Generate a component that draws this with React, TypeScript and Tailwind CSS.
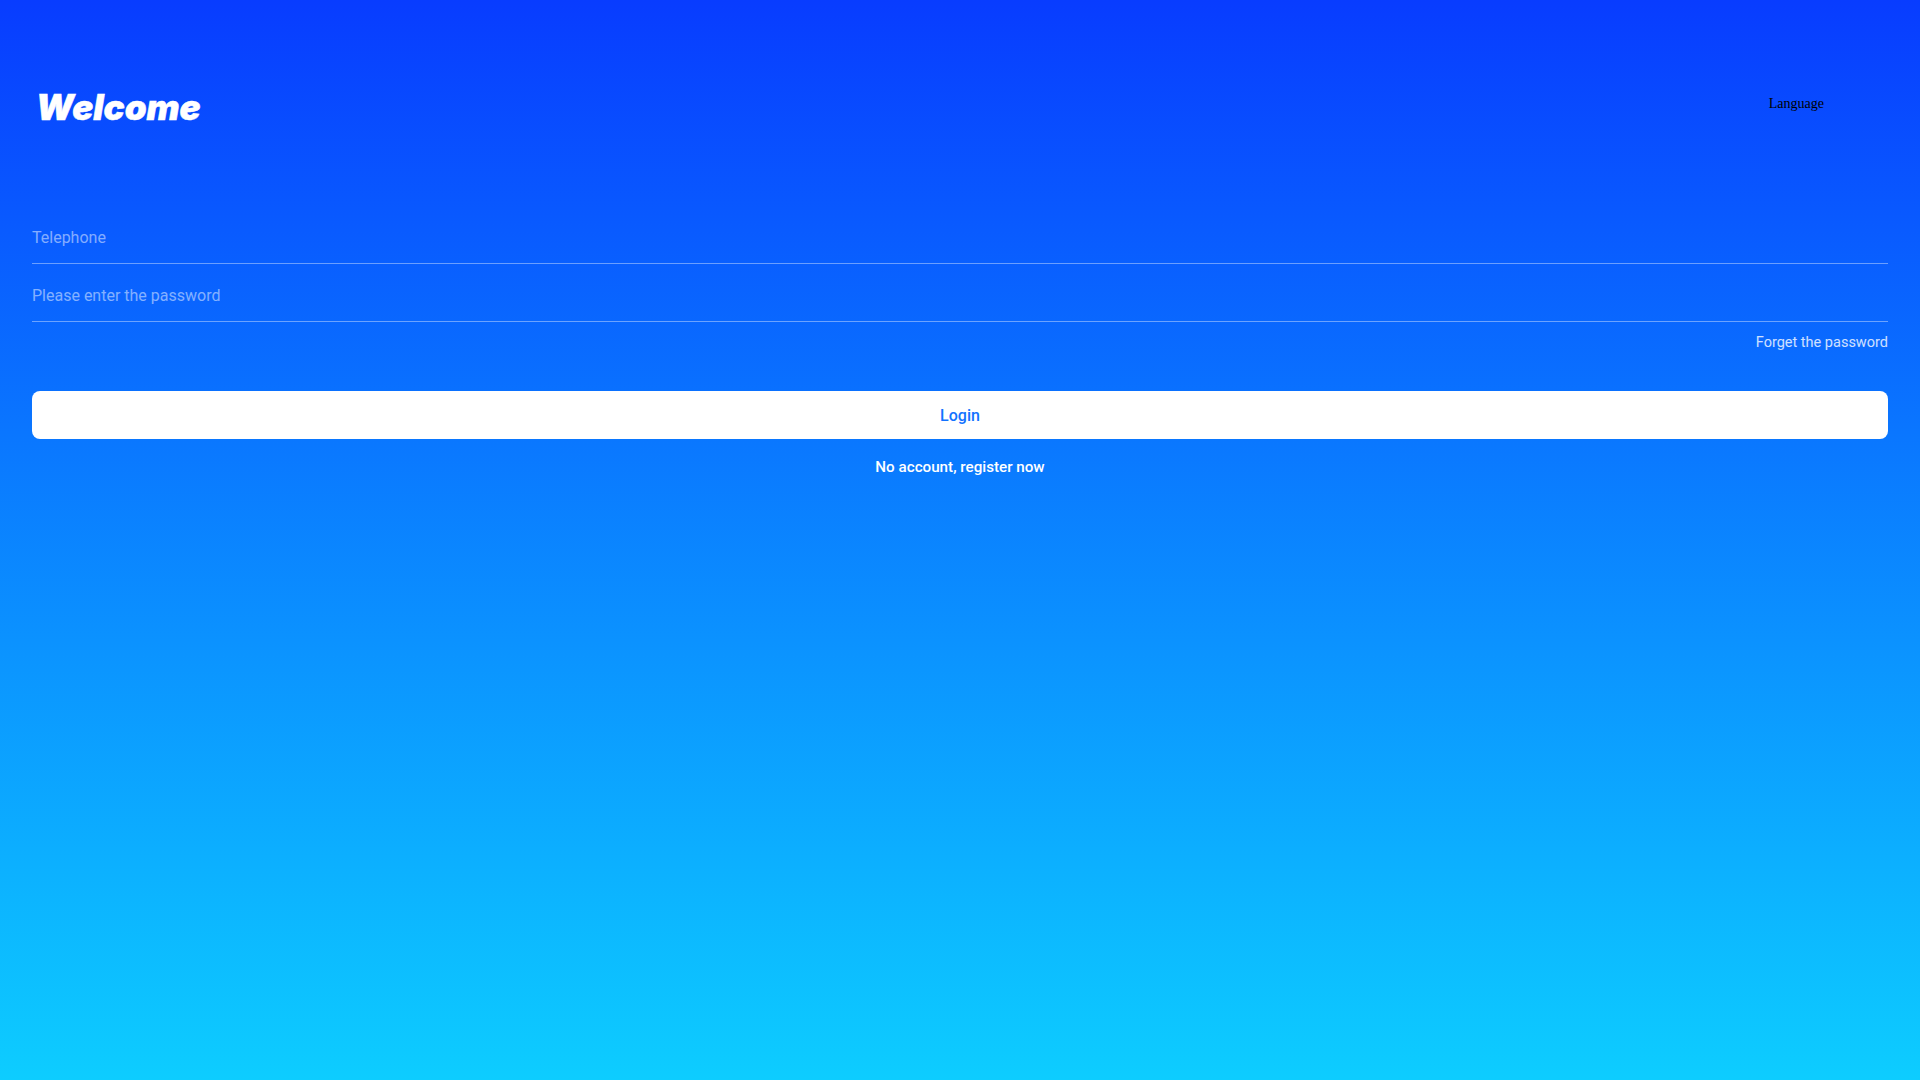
const App = () => {
  return (
    <div className="flex flex-col w-full min-h-screen px-8 bg-linear-to-b/srgb from-[#083cff] to-[#0dcdff] font-['Roboto',sans-serif]">
      <div className="flex justify-between h-[206px] pt-[91px]">
        <h1 className="pl-1 text-[35px] leading-[32px] font-black italic text-white font-['Inter',sans-serif] [-webkit-text-stroke:0.5px_white]">Welcome</h1>
        <div className="mr-16 mt-[1px] h-[24px] text-sm leading-[24px] text-black font-['Liberation_Serif',serif]">
          Language
        </div>
      </div>
      <div className="flex items-center h-[58px] pt-[7px] border-b border-white/40">
        <input
          className="w-full bg-transparent outline-none text-base text-white placeholder:text-white/50"
          placeholder="Telephone"
        />
      </div>
      <div className="flex items-center h-[58px] pt-[7px] border-b border-white/40">
        <input
          type="password"
          className="w-full bg-transparent outline-none text-base text-white placeholder:text-white/50"
          placeholder="Please enter the password"
        />
      </div>
      <div className="flex justify-end mt-[10px] text-[14.5px] leading-[22px] text-white/80">Forget the password</div>
      <button className="flex items-center justify-center mt-[37px] h-12 pt-px rounded-lg bg-white text-[#1272ff] text-base font-medium">
        Login
      </button>
      <div className="mt-[17px] text-center text-[15.2px] leading-[22px] font-medium text-white">No account, register now</div>
    </div>
  );
};

export default App;
